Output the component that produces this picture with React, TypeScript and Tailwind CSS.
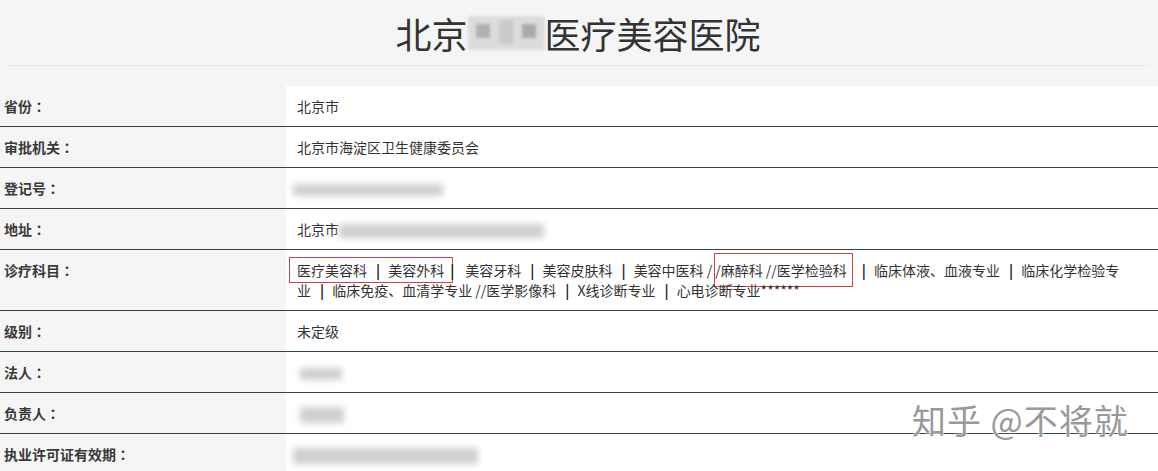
import React from 'react';

const font = { fontFamily: '"Microsoft YaHei", "Noto Sans CJK SC", "Noto Sans", sans-serif' };
const jp = { fontFamily: '"Noto Sans CJK JP", sans-serif' };

const Blur: React.FC<{ w: number; h?: number; className?: string }> = ({ w, h = 14, className = '' }) => (
  <span
    className={`inline-block align-middle bg-[#cfcfcf] blur-[3px] ${className}`}
    style={{ width: w, height: h }}
  />
);

const Sep = () => <span className="ml-[9px] mr-[8px] font-bold text-[#222]">|</span>;

interface Row {
  label: string;
  value: React.ReactNode;
}

const rows: Row[] = [
  { label: '省份', value: '北京市' },
  { label: '审批机关', value: '北京市海淀区卫生健康委员会' },
  { label: '登记号', value: <Blur w={150} h={12} className="-ml-[4px]" /> },
  {
    label: '地址',
    value: (
      <span>
        北京市
        <Blur w={205} h={14} />
      </span>
    ),
  },
  {
    label: '诊疗科目',
    value: (
      <span>
        <span className="border border-[#c8464a] -ml-[8px] pl-[7px] pr-[8px] py-[2px]">
          医疗美容科
          <Sep />
          美容外科
        </span>
        <span className="-ml-[3px] mr-[11px] font-bold text-[#222]">|</span>
        美容牙科
        <Sep />
        美容皮肤科
        <Sep />
        美容中医科 /<span className="ml-[2px] border border-[#c8464a] py-[6px] pr-[5px]">/麻醉科 //医学检验科</span>
        <Sep />
        临床体液、血液专业
        <Sep />
        临床化学检验专业
        <Sep />
        临床免疫、血清学专业 //医学影像科
        <Sep />
        X线诊断专业
        <Sep />
        心电诊断专业******
      </span>
    ),
  },
  { label: '级别', value: '未定级' },
  { label: '法人', value: <Blur w={42} h={12} className="ml-[3px]" /> },
  { label: '负责人', value: <Blur w={44} h={16} className="ml-[3px]" /> },
  { label: '执业许可证有效期', value: <Blur w={185} h={16} className="-ml-[4px]" /> },
];

export default function App() {
  return (
    <div className="relative w-[1158px] h-[471px] overflow-hidden bg-[#f5f5f5] text-[#333]" style={font}>
      <div className="h-[65px] flex items-center justify-center">
        <h1 className="text-[36px] leading-none font-normal text-[#333] flex items-center -ml-[2px]">
          北京
          <span className="inline-flex w-[77px] h-[34px] bg-[#dcdcdc] blur-[1.5px] items-start justify-around px-[4px]">
            <span className="w-[14px] h-[14px] bg-[#b0b0b0] mt-[8px]" />
            <span className="w-[14px] h-[24px] bg-[#cacaca] mt-[4px]" />
            <span className="w-[14px] h-[14px] bg-[#aaaaaa] mt-[8px]" />
          </span>
          医疗美容医院
        </h1>
      </div>
      <div className="mx-[8px] h-px bg-[#e9e9e9]" />
      <div className="mt-[20px] grid grid-cols-[286px_1fr]">
        {rows.map((r) => (
          <React.Fragment key={r.label}>
            <div className="border-b border-[#2f4a3d] pl-[4px] py-[10px] text-[14px] leading-[20px] font-bold text-[#3a3a3a]">
              {r.label}
              <span style={jp}>：</span>
            </div>
            <div className="border-b border-[#2f4a3d] bg-white pl-[11px] pr-[38px] py-[10px] text-[14px] leading-[20px] text-[#333]">
              {r.value}
            </div>
          </React.Fragment>
        ))}
      </div>
      <div
        className="absolute left-[912px] top-[403px] text-[34px] leading-none text-[#999] tracking-[1px]"
        style={{ textShadow: '0 0 2px #fff, 0 0 2px #fff' }}
      >
        知乎 @不将就
      </div>
    </div>
  );
}
